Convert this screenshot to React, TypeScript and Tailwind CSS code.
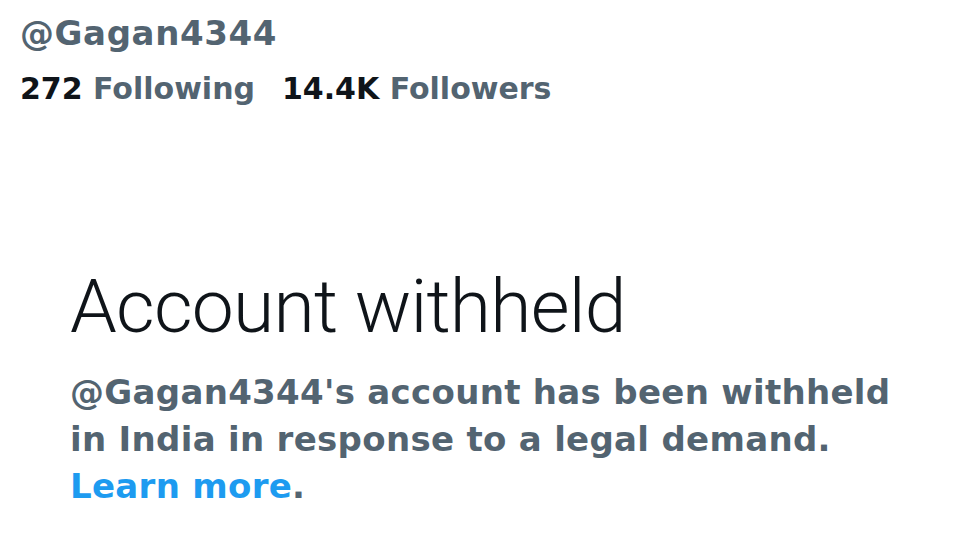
export default function App() {
  return (
    <div className="w-[976px] h-[549px] bg-white overflow-hidden">
      <div
        className="pl-[20px] pt-[13px] font-bold text-[#536471]"
        style={{ fontFamily: "'DejaVu Sans', 'Liberation Sans', sans-serif" }}
      >
        <p className="text-[34px] leading-[40px] tracking-[0.6px]">@Gagan4344</p>
        <p className="mt-[16px] text-[30px] leading-[40px]">
          <span className="text-[#0f1419]">272</span> Following
          <span className="ml-[27px] text-[#0f1419]">14.4K</span> Followers
        </p>
      </div>
      <div className="pl-[70px] pt-[157px]">
        <h1
          className="text-[75px] leading-[80px] font-light text-[#0f1419] tracking-[-0.8px]"
          style={{ fontFamily: "Roboto, 'Liberation Sans', sans-serif" }}
        >
          Account withheld
        </h1>
        <p
          className="mt-[23px] text-[34px] leading-[47px] font-bold text-[#536471] tracking-[0.3px]"
          style={{ fontFamily: "'DejaVu Sans', 'Liberation Sans', sans-serif" }}
        >
          @Gagan4344's account has been withheld
          <br />
          in India in response to a legal demand.
          <br />
          <span className="text-[#1d9bf0]">Learn more</span>.
        </p>
      </div>
    </div>
  );
}
